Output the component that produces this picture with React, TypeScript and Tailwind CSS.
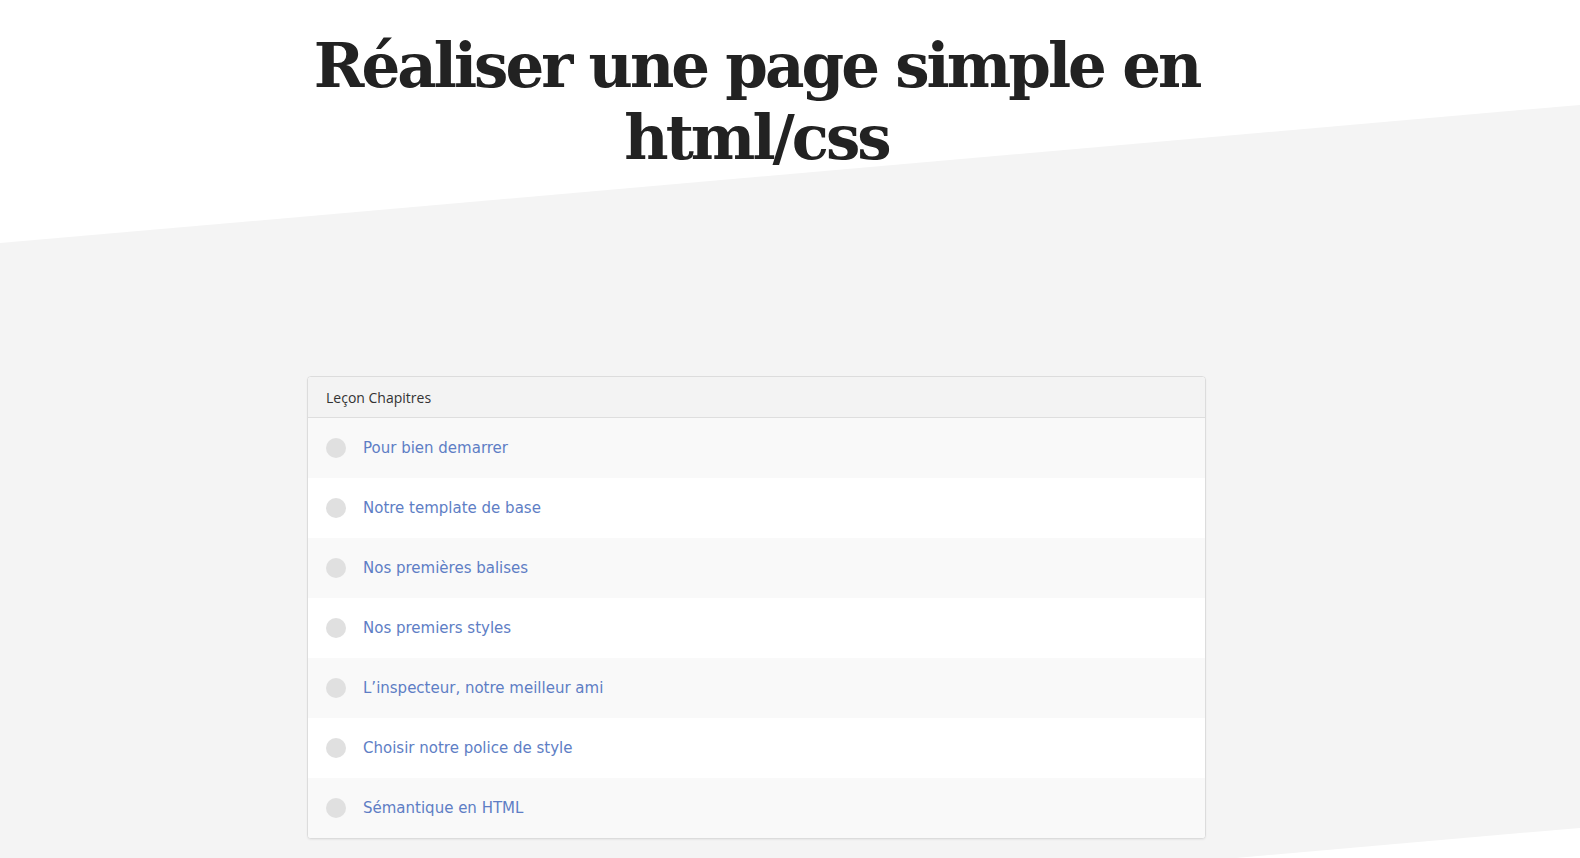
const chapters = [
  "Pour bien demarrer",
  "Notre template de base",
  "Nos premières balises",
  "Nos premiers styles",
  "L’inspecteur, notre meilleur ami",
  "Choisir notre police de style",
  "Sémantique en HTML",
];

const App = () => {
  return (
    <div className="relative isolate min-h-[858px] overflow-hidden bg-white">
      {/* slanted band */}
      <div className="absolute left-0 right-0 top-[174px] h-[723px] -skew-y-5 bg-[#f4f4f4] -z-10" />

      <div className="pl-[307px] w-[1206px]">
        {/* title */}
        <h1
          className="pt-[30px] text-center text-[61px] leading-[72px] font-bold text-[#222] tracking-[-3px] whitespace-nowrap"
          style={{ fontFamily: '"DejaVu Serif", serif' }}
        >
          Réaliser une page simple en
          <br />
          html/css
        </h1>

        {/* chapters */}
        <div className="mt-[202px] rounded border border-[#dcdcdc] bg-white shadow-[0_1px_2px_rgba(0,0,0,0.06)] overflow-hidden">
          <div
            className="h-[41px] flex items-center px-[18px] bg-[#f3f3f3] border-b border-[#dedede] text-[14px] text-[#333]"
            style={{ fontFamily: '"Open Sans", sans-serif' }}
          >
            Leçon Chapitres
          </div>
          {chapters.map((title, i) => (
            <div
              key={title}
              className={
                "h-[60px] flex items-center px-[18px] " +
                (i % 2 === 0 ? "bg-[#f9f9f9]" : "bg-white")
              }
            >
              <span className="w-[20px] h-[20px] rounded-full bg-[#e0e0e0] shrink-0" />
              <span
                className="ml-[17px] text-[15px] text-[#5e7ec5]"
                style={{ fontFamily: '"DejaVu Sans", sans-serif' }}
              >
                {title}
              </span>
            </div>
          ))}
        </div>
      </div>
    </div>
  );
};

export default App;
